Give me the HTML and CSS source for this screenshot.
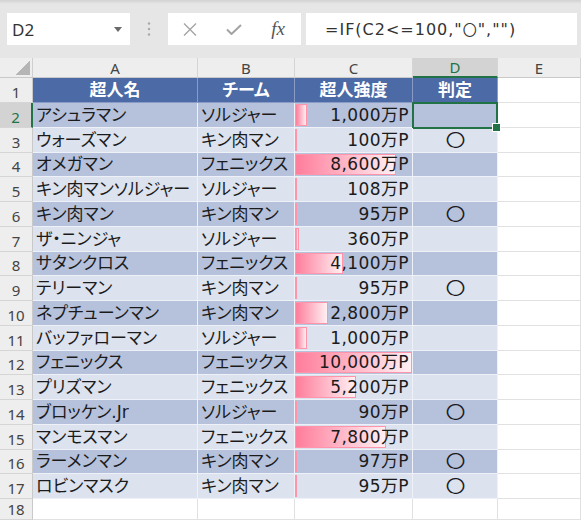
FILE: index.html
```html
<!DOCTYPE html>
<html lang="ja">
<head>
<meta charset="utf-8">
<link rel="stylesheet" href="styles.css">
</head>
<body>
<div class="toolbar">
  <div class="namebox"><span>D2</span><svg width="8" height="5" viewBox="0 0 8 5"><path d="M0 0h8L4 5z" fill="#6a6a6a"/></svg></div>
  <div class="grip"><svg width="4" height="14" viewBox="0 0 4 14"><circle cx="2" cy="1.5" r="1.2" fill="#a9a9a9"/><circle cx="2" cy="7" r="1.2" fill="#a9a9a9"/><circle cx="2" cy="12.5" r="1.2" fill="#a9a9a9"/></svg></div>
  <div class="fxbox">
    <span class="btn"><svg width="14" height="13" viewBox="0 0 14 13"><path d="M1 0.5L13 12.5M13 0.5L1 12.5" stroke="#a3a3a3" stroke-width="1.3" fill="none"/></svg></span>
    <span class="btn"><svg width="16" height="11" viewBox="0 0 16 11"><path d="M1 5.5L5.5 10 15 1" stroke="#a3a3a3" stroke-width="2" fill="none"/></svg></span>
    <span class="btn fx">fx</span>
  </div>
  <div class="formula">=IF(C2&lt;=100,"<span class="maru">〇</span>","")</div>
</div>
<div class="sheet">
  <div class="row hdr">
    <div class="corner"></div><div class="ch">A</div><div class="ch">B</div><div class="ch">C</div><div class="ch on">D</div><div class="ch">E</div>
  </div>
  <div class="row r1">
    <div class="rh">1</div><div class="c th">超人名</div><div class="c th">チーム</div><div class="c th">超人強度</div><div class="c th">判定</div><div class="c e"></div>
  </div>
  <div class="row dk">
    <div class="rh on">2</div><div class="c">アシュラマン</div><div class="c">ソルジャー</div><div class="c num"><span class="bar" style="width:10%"></span><span class="t">1,000万P</span></div><div class="c mk sel"></div><div class="c e"></div>
  </div>
  <div class="row lt">
    <div class="rh">3</div><div class="c">ウォーズマン</div><div class="c">キン肉マン</div><div class="c num"><span class="bar" style="width:1%"></span><span class="t">100万P</span></div><div class="c mk"><span class="o">〇</span></div><div class="c e"></div>
  </div>
  <div class="row dk">
    <div class="rh">4</div><div class="c">オメガマン</div><div class="c">フェニックス</div><div class="c num"><span class="bar" style="width:86%"></span><span class="t">8,600万P</span></div><div class="c mk"></div><div class="c e"></div>
  </div>
  <div class="row lt">
    <div class="rh">5</div><div class="c">キン肉マンソルジャー</div><div class="c">ソルジャー</div><div class="c num"><span class="bar" style="width:1.08%"></span><span class="t">108万P</span></div><div class="c mk"></div><div class="c e"></div>
  </div>
  <div class="row dk">
    <div class="rh">6</div><div class="c">キン肉マン</div><div class="c">キン肉マン</div><div class="c num"><span class="bar" style="width:0.95%"></span><span class="t">95万P</span></div><div class="c mk"><span class="o">〇</span></div><div class="c e"></div>
  </div>
  <div class="row lt">
    <div class="rh">7</div><div class="c">ザ・ニンジャ</div><div class="c">ソルジャー</div><div class="c num"><span class="bar" style="width:3.6%"></span><span class="t">360万P</span></div><div class="c mk"></div><div class="c e"></div>
  </div>
  <div class="row dk">
    <div class="rh">8</div><div class="c">サタンクロス</div><div class="c">フェニックス</div><div class="c num"><span class="bar" style="width:41%"></span><span class="t">4,100万P</span></div><div class="c mk"></div><div class="c e"></div>
  </div>
  <div class="row lt">
    <div class="rh">9</div><div class="c">テリーマン</div><div class="c">キン肉マン</div><div class="c num"><span class="bar" style="width:0.95%"></span><span class="t">95万P</span></div><div class="c mk"><span class="o">〇</span></div><div class="c e"></div>
  </div>
  <div class="row dk">
    <div class="rh">10</div><div class="c">ネプチューンマン</div><div class="c">キン肉マン</div><div class="c num"><span class="bar" style="width:28%"></span><span class="t">2,800万P</span></div><div class="c mk"></div><div class="c e"></div>
  </div>
  <div class="row lt">
    <div class="rh">11</div><div class="c">バッファローマン</div><div class="c">ソルジャー</div><div class="c num"><span class="bar" style="width:10%"></span><span class="t">1,000万P</span></div><div class="c mk"></div><div class="c e"></div>
  </div>
  <div class="row dk">
    <div class="rh">12</div><div class="c">フェニックス</div><div class="c">フェニックス</div><div class="c num"><span class="bar" style="width:100%"></span><span class="t">10,000万P</span></div><div class="c mk"></div><div class="c e"></div>
  </div>
  <div class="row lt">
    <div class="rh">13</div><div class="c">プリズマン</div><div class="c">フェニックス</div><div class="c num"><span class="bar" style="width:52%"></span><span class="t">5,200万P</span></div><div class="c mk"></div><div class="c e"></div>
  </div>
  <div class="row dk">
    <div class="rh">14</div><div class="c">ブロッケン.Jr</div><div class="c">ソルジャー</div><div class="c num"><span class="bar" style="width:0.9%"></span><span class="t">90万P</span></div><div class="c mk"><span class="o">〇</span></div><div class="c e"></div>
  </div>
  <div class="row lt">
    <div class="rh">15</div><div class="c">マンモスマン</div><div class="c">フェニックス</div><div class="c num"><span class="bar" style="width:78%"></span><span class="t">7,800万P</span></div><div class="c mk"></div><div class="c e"></div>
  </div>
  <div class="row dk">
    <div class="rh">16</div><div class="c">ラーメンマン</div><div class="c">キン肉マン</div><div class="c num"><span class="bar" style="width:0.97%"></span><span class="t">97万P</span></div><div class="c mk"><span class="o">〇</span></div><div class="c e"></div>
  </div>
  <div class="row lt">
    <div class="rh">17</div><div class="c">ロビンマスク</div><div class="c">キン肉マン</div><div class="c num"><span class="bar" style="width:0.95%"></span><span class="t">95万P</span></div><div class="c mk"><span class="o">〇</span></div><div class="c e"></div>
  </div>
  <div class="row last">
    <div class="rh">18</div><div class="c e"></div><div class="c e"></div><div class="c e"></div><div class="c e"></div><div class="c e"></div>
  </div>
</div>
</body>
</html>
```
FILE: styles.css
```css
* { box-sizing: border-box; }
body {
  margin: 0;
  width: 581px;
  height: 520px;
  overflow: hidden;
  background: #fff;
  font-family: "DejaVu Sans", "Noto Sans CJK JP", sans-serif;
  color: #1b1b1b;
}
.toolbar {
  height: 58px;
  display: flex;
  align-items: flex-start;
  padding-top: 13px;
  background: linear-gradient(#d2d2d2, #e6e6e6 4px, #e6e6e6);
}
.namebox {
  margin-left: 7px;
  width: 123px;
  height: 32px;
  background: #fff;
  display: flex;
  align-items: center;
  justify-content: space-between;
  padding: 0 8px 0 5px;
  font: 17px "Noto Sans", sans-serif;
  color: #333;
}
.grip {
  width: 38px;
  height: 32px;
  display: flex;
  align-items: center;
  justify-content: center;
}
.fxbox {
  width: 133px;
  height: 32px;
  background: #fff;
  display: flex;
  align-items: center;
  padding-left: 7px;
  gap: 14px;
}
.btn {
  width: 30px;
  display: flex;
  justify-content: center;
  align-items: center;
}
.fx {
  font: italic 19px "Liberation Serif", serif;
  color: #555;
}
.formula {
  margin-left: 5px;
  width: 271px;
  height: 32px;
  background: #fff;
  padding-left: 19px;
  font: 16px "DejaVu Sans", sans-serif;
  letter-spacing: 1px;
  color: #333;
  line-height: 32px;
  white-space: nowrap;
}
.maru { font-size: 14px; font-family: "Noto Sans CJK JP", sans-serif; }

.row {
  display: grid;
  grid-template-columns: 33px 165px 97px 118px 85px 83px;
  height: 24.75px;
}
.row.hdr { height: 20px; }
.row.r1 { height: 25px; }
.row.last { height: 21px; }

.corner {
  background: linear-gradient(135deg, transparent 50%, #b5b5b5 50%) right 2px bottom 2px / 15px 15px no-repeat, #eeeeee;
  border-right: 1px solid #d0d0d0;
  border-bottom: 1px solid #c9c9c9;
}
.ch {
  background: #eeeeee;
  display: flex;
  justify-content: center;
  align-items: flex-end;
  font: 15px "Noto Sans", sans-serif;
  line-height: 18px;
  color: #444;
  border-right: 1px solid #d5d5d5;
  border-bottom: 1px solid #c9c9c9;
}
.ch.on {
  background: #d3d3d3;
  color: #217346;
  border-bottom: 2px solid #217346;
}
.rh {
  background: #eeeeee;
  border-right: 1px solid #c9c9c9;
  border-bottom: 1px solid #d5d5d5;
  display: flex;
  justify-content: center;
  align-items: flex-end;
  font: 15px "Noto Sans", sans-serif;
  line-height: 18px;
  color: #444;
  padding-bottom: 1px;
}
.rh.on {
  background: #d3d3d3;
  color: #217346;
  border-right: 2px solid #217346;
}
.c {
  border-right: 1px solid #eef1f7;
  border-bottom: 1px solid #eef1f7;
  display: flex;
  align-items: flex-end;
  padding: 0 3px 2px;
  font-size: 17px;
  line-height: 20px;
  white-space: nowrap;
  font-feature-settings: "palt";
}
.dk .c { background: #b6c1db; }
.lt .c { background: #dce2ee; }
.row .c.e {
  background: #fff;
  border-color: #e1e1e1;
}
.row .th {
  background: #4b6aa6;
  color: #fff;
  font-weight: bold;
  justify-content: center;
  border-color: #8a9cc6;
}
.num {
  position: relative;
  justify-content: flex-end;
  letter-spacing: 0.4px;
}
.bar {
  position: absolute;
  left: 0;
  top: 1px;
  bottom: 1px;
  background: linear-gradient(90deg, #ff7d9b, #fff0f3);
  border: 1px solid #ff94ab;
}
.t { position: relative; }
.mk { justify-content: center; }
.o {
  display: inline-block;
  transform: scale(1.15, 0.92);
  transform-origin: 50% 70%;
}
.sel { position: relative; }
.sel::after {
  content: "";
  position: absolute;
  left: -1px;
  top: -1px;
  right: -1px;
  bottom: -2px;
  border: 2px solid #217346;
}
.sel::before {
  content: "";
  position: absolute;
  right: -4px;
  bottom: -5px;
  width: 7px;
  height: 7px;
  background: #217346;
  border: 1px solid #fff;
  z-index: 1;
}
```
